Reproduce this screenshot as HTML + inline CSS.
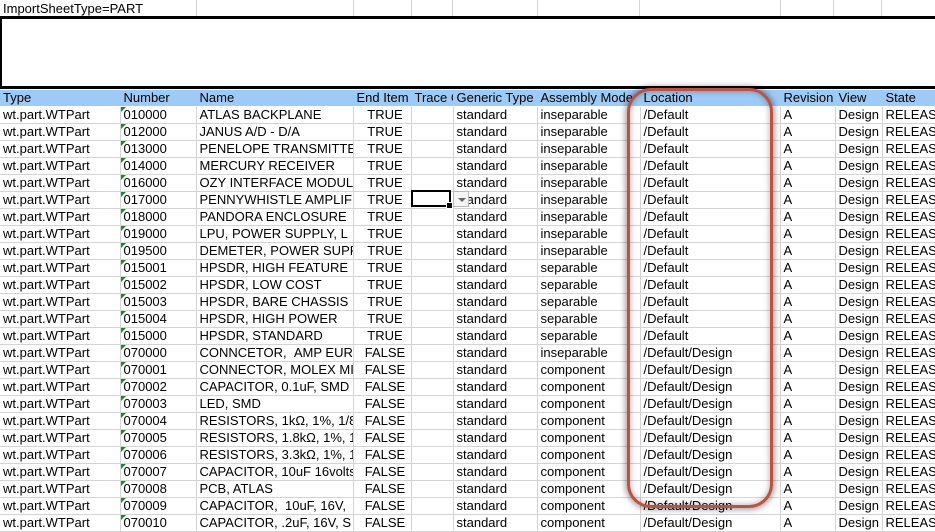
<!DOCTYPE html>
<html><head><meta charset="utf-8"><style>
body{margin:0;width:935px;height:520px;overflow:hidden;background:#fff;font-family:"Liberation Sans",Arial,sans-serif;font-size:13px;color:#000;position:relative}
table{border-collapse:collapse;table-layout:fixed;position:absolute;left:0;top:90px;width:935px}
td{height:16px;padding:0 0 0 3px;border-right:1px solid #d4d4d4;border-bottom:1px solid #d4d4d4;white-space:nowrap;overflow:hidden;line-height:16px;vertical-align:middle}
tr.h td{background:#9dcbf7;border-right-color:#9dcbf7;border-bottom-color:#fff}
td.c{text-align:center;padding:0 0 0 6px}
td.n{position:relative}
td.n:before{content:"";position:absolute;left:0;top:0;border-top:5px solid #1a8a2a;border-right:5px solid transparent}
.top{position:absolute;left:0;top:0;width:935px;height:17px}
.top div{position:absolute;top:0;height:17px;border-right:1px solid #d4d4d4}
.box{position:absolute;left:0;top:16px;width:935px;height:67px;border-top:3px solid #000;border-bottom:3px solid #000;border-left:2px solid #000;box-sizing:content-box}
.oval{position:absolute;left:627px;top:88px;width:140px;height:414px;border:3.5px solid #c1513c;border-radius:24px;box-shadow:0 0 6px 2px rgba(0,0,0,0.35),inset 0 0 6px 1px rgba(0,0,0,0.25)}
.sel{position:absolute;left:411px;top:190px;width:40px;height:17px;border:2px solid #000;box-sizing:border-box}
.sel:after{content:"";position:absolute;right:-4px;bottom:-4px;width:5px;height:5px;background:#000;border:1px solid #fff}
.dd{position:absolute;left:453px;top:191px;width:16px;height:16px;background:#f4f4f4;border:1px solid #b8b8b8;box-sizing:border-box}
.dd:after{content:"";position:absolute;left:4px;top:6px;border-top:4px solid #666;border-left:4px solid transparent;border-right:4px solid transparent}
</style></head><body>
<div class="top">
<span style="position:absolute;left:3px;top:0;line-height:17px">ImportSheetType=PART</span>
<div style="left:0;width:196px"></div><div style="left:0;width:353px"></div><div style="left:0;width:411px"></div><div style="left:0;width:452px"></div><div style="left:0;width:537px"></div><div style="left:0;width:639px"></div><div style="left:0;width:780px"></div><div style="left:0;width:833px"></div><div style="left:0;width:881px"></div>
</div>
<div class="box"></div>
<table>
<colgroup><col style="width:120px"><col style="width:76px"><col style="width:157px"><col style="width:58px"><col style="width:42px"><col style="width:84px"><col style="width:103px"><col style="width:140px"><col style="width:55px"><col style="width:47px"><col style="width:53px"></colgroup>
<tr class="h"><td>Type</td><td>Number</td><td>Name</td><td>End Item</td><td>Trace Code</td><td>Generic Type</td><td>Assembly Mode</td><td>Location</td><td>Revision</td><td>View</td><td>State</td></tr>
<tr><td>wt.part.WTPart</td><td class="n">010000</td><td>ATLAS BACKPLANE</td><td class="c">TRUE</td><td></td><td>standard</td><td>inseparable</td><td>/Default</td><td>A</td><td>Design</td><td>RELEASED</td></tr>
<tr><td>wt.part.WTPart</td><td class="n">012000</td><td>JANUS A/D - D/A</td><td class="c">TRUE</td><td></td><td>standard</td><td>inseparable</td><td>/Default</td><td>A</td><td>Design</td><td>RELEASED</td></tr>
<tr><td>wt.part.WTPart</td><td class="n">013000</td><td>PENELOPE TRANSMITTER</td><td class="c">TRUE</td><td></td><td>standard</td><td>inseparable</td><td>/Default</td><td>A</td><td>Design</td><td>RELEASED</td></tr>
<tr><td>wt.part.WTPart</td><td class="n">014000</td><td>MERCURY RECEIVER</td><td class="c">TRUE</td><td></td><td>standard</td><td>inseparable</td><td>/Default</td><td>A</td><td>Design</td><td>RELEASED</td></tr>
<tr><td>wt.part.WTPart</td><td class="n">016000</td><td>OZY INTERFACE MODULE</td><td class="c">TRUE</td><td></td><td>standard</td><td>inseparable</td><td>/Default</td><td>A</td><td>Design</td><td>RELEASED</td></tr>
<tr><td>wt.part.WTPart</td><td class="n">017000</td><td>PENNYWHISTLE AMPLIFIER</td><td class="c">TRUE</td><td></td><td>standard</td><td>inseparable</td><td>/Default</td><td>A</td><td>Design</td><td>RELEASED</td></tr>
<tr><td>wt.part.WTPart</td><td class="n">018000</td><td>PANDORA ENCLOSURE</td><td class="c">TRUE</td><td></td><td>standard</td><td>inseparable</td><td>/Default</td><td>A</td><td>Design</td><td>RELEASED</td></tr>
<tr><td>wt.part.WTPart</td><td class="n">019000</td><td>LPU, POWER SUPPLY, L</td><td class="c">TRUE</td><td></td><td>standard</td><td>inseparable</td><td>/Default</td><td>A</td><td>Design</td><td>RELEASED</td></tr>
<tr><td>wt.part.WTPart</td><td class="n">019500</td><td>DEMETER, POWER SUPPLY</td><td class="c">TRUE</td><td></td><td>standard</td><td>inseparable</td><td>/Default</td><td>A</td><td>Design</td><td>RELEASED</td></tr>
<tr><td>wt.part.WTPart</td><td class="n">015001</td><td>HPSDR, HIGH FEATURE</td><td class="c">TRUE</td><td></td><td>standard</td><td>separable</td><td>/Default</td><td>A</td><td>Design</td><td>RELEASED</td></tr>
<tr><td>wt.part.WTPart</td><td class="n">015002</td><td>HPSDR, LOW COST</td><td class="c">TRUE</td><td></td><td>standard</td><td>separable</td><td>/Default</td><td>A</td><td>Design</td><td>RELEASED</td></tr>
<tr><td>wt.part.WTPart</td><td class="n">015003</td><td>HPSDR, BARE CHASSIS</td><td class="c">TRUE</td><td></td><td>standard</td><td>separable</td><td>/Default</td><td>A</td><td>Design</td><td>RELEASED</td></tr>
<tr><td>wt.part.WTPart</td><td class="n">015004</td><td>HPSDR, HIGH POWER</td><td class="c">TRUE</td><td></td><td>standard</td><td>separable</td><td>/Default</td><td>A</td><td>Design</td><td>RELEASED</td></tr>
<tr><td>wt.part.WTPart</td><td class="n">015000</td><td>HPSDR, STANDARD</td><td class="c">TRUE</td><td></td><td>standard</td><td>separable</td><td>/Default</td><td>A</td><td>Design</td><td>RELEASED</td></tr>
<tr><td>wt.part.WTPart</td><td class="n">070000</td><td>CONNCETOR, &nbsp;AMP EURO</td><td class="c">FALSE</td><td></td><td>standard</td><td>inseparable</td><td>/Default/Design</td><td>A</td><td>Design</td><td>RELEASED</td></tr>
<tr><td>wt.part.WTPart</td><td class="n">070001</td><td>CONNECTOR, MOLEX MINI</td><td class="c">FALSE</td><td></td><td>standard</td><td>component</td><td>/Default/Design</td><td>A</td><td>Design</td><td>RELEASED</td></tr>
<tr><td>wt.part.WTPart</td><td class="n">070002</td><td>CAPACITOR, 0.1uF, SMD</td><td class="c">FALSE</td><td></td><td>standard</td><td>component</td><td>/Default/Design</td><td>A</td><td>Design</td><td>RELEASED</td></tr>
<tr><td>wt.part.WTPart</td><td class="n">070003</td><td>LED, SMD</td><td class="c">FALSE</td><td></td><td>standard</td><td>component</td><td>/Default/Design</td><td>A</td><td>Design</td><td>RELEASED</td></tr>
<tr><td>wt.part.WTPart</td><td class="n">070004</td><td>RESISTORS, 1kΩ, 1%, 1/8</td><td class="c">FALSE</td><td></td><td>standard</td><td>component</td><td>/Default/Design</td><td>A</td><td>Design</td><td>RELEASED</td></tr>
<tr><td>wt.part.WTPart</td><td class="n">070005</td><td>RESISTORS, 1.8kΩ, 1%, 1</td><td class="c">FALSE</td><td></td><td>standard</td><td>component</td><td>/Default/Design</td><td>A</td><td>Design</td><td>RELEASED</td></tr>
<tr><td>wt.part.WTPart</td><td class="n">070006</td><td>RESISTORS, 3.3kΩ, 1%, 1</td><td class="c">FALSE</td><td></td><td>standard</td><td>component</td><td>/Default/Design</td><td>A</td><td>Design</td><td>RELEASED</td></tr>
<tr><td>wt.part.WTPart</td><td class="n">070007</td><td>CAPACITOR, 10uF 16volts</td><td class="c">FALSE</td><td></td><td>standard</td><td>component</td><td>/Default/Design</td><td>A</td><td>Design</td><td>RELEASED</td></tr>
<tr><td>wt.part.WTPart</td><td class="n">070008</td><td>PCB, ATLAS</td><td class="c">FALSE</td><td></td><td>standard</td><td>component</td><td>/Default/Design</td><td>A</td><td>Design</td><td>RELEASED</td></tr>
<tr><td>wt.part.WTPart</td><td class="n">070009</td><td>CAPACITOR, &nbsp;10uF, 16V,</td><td class="c">FALSE</td><td></td><td>standard</td><td>component</td><td>/Default/Design</td><td>A</td><td>Design</td><td>RELEASED</td></tr>
<tr><td>wt.part.WTPart</td><td class="n">070010</td><td>CAPACITOR, .2uF, 16V, S</td><td class="c">FALSE</td><td></td><td>standard</td><td>component</td><td>/Default/Design</td><td>A</td><td>Design</td><td>RELEASED</td></tr>
</table>
<div class="sel"></div><div class="dd"></div>
<div class="oval"></div>
</body></html>
